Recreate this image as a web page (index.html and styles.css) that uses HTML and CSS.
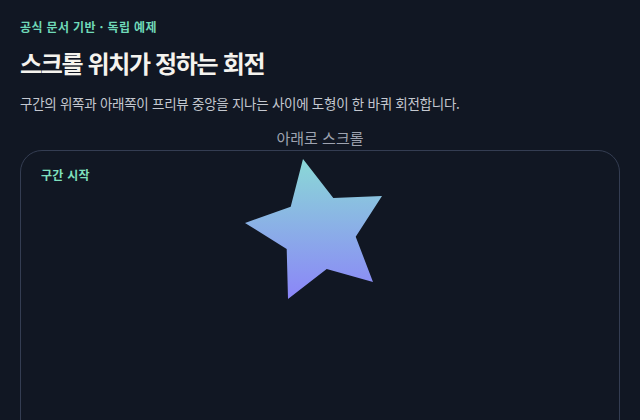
FILE: index.html
```html
<!DOCTYPE html>
<html lang="ko">
<head>
<meta charset="utf-8">
<link rel="stylesheet" href="styles.css">
</head>
<body>
<main class="page">
  <p class="eyebrow">공식 문서 기반 · 독립 예제</p>
  <h1 class="title">스크롤 위치가 정하는 회전</h1>
  <p class="lead">구간의 위쪽과 아래쪽이 프리뷰 중앙을 지나는 사이에 도형이 한 바퀴 회전합니다.</p>
  <p class="hint">아래로 스크롤</p>
  <section class="stage">
    <span class="label">구간 시작</span>
    <svg class="star" width="146" height="144" viewBox="240 158 146 144" aria-hidden="true">
      <defs>
        <linearGradient id="g" x1="0" y1="0" x2="0" y2="1">
          <stop offset="0" stop-color="#8ad9d6"/>
          <stop offset="1" stop-color="#8b85f8"/>
        </linearGradient>
      </defs>
      <polygon fill="url(#g)" points="303,160 333.3,199 382,197 355.7,237.7 373,283 326.7,270 288,300 286.7,250 245,224 290.7,207.7"/>
    </svg>
  </section>
</main>
</body>
</html>
```
FILE: styles.css
```css
html, body {
  margin: 0;
  padding: 0;
  background: #111723;
}
body {
  font-family: "Noto Sans CJK KR", "Noto Sans", sans-serif;
  color: #e5e7eb;
}
.page {
  padding: 17px 20px 0;
  display: flex;
  flex-direction: column;
}
.eyebrow {
  margin: 0;
  font-size: 12px;
  line-height: 20px;
  font-weight: 600;
  color: #6fd9b8;
  letter-spacing: 0.03em;
}
.title {
  margin: 10px 0 0;
  font-size: 24px;
  line-height: 31px;
  font-weight: 700;
  letter-spacing: -1.35px;
  color: #f5f3ee;
}
.lead {
  margin: 15px 0 0;
  font-size: 13.5px;
  line-height: 20px;
  color: #c4c8d0;
  letter-spacing: -0.02em;
}
.hint {
  margin: 13px 0 0;
  text-align: center;
  font-size: 15px;
  line-height: 24px;
  color: #9ea3b0;
}
.stage {
  margin-top: 0;
  height: 300px;
  border: 1px solid #343d52;
  border-radius: 22px;
  display: flex;
  flex-direction: column;
  padding: 6px 20px 0;
}
.label {
  align-self: flex-start;
  font-size: 12px;
  line-height: 36px;
  font-weight: 700;
  color: #7fe0be;
  letter-spacing: 0.02em;
}
.star {
  display: block;
  margin-top: -36px;
  margin-left: 199px;
}
```
